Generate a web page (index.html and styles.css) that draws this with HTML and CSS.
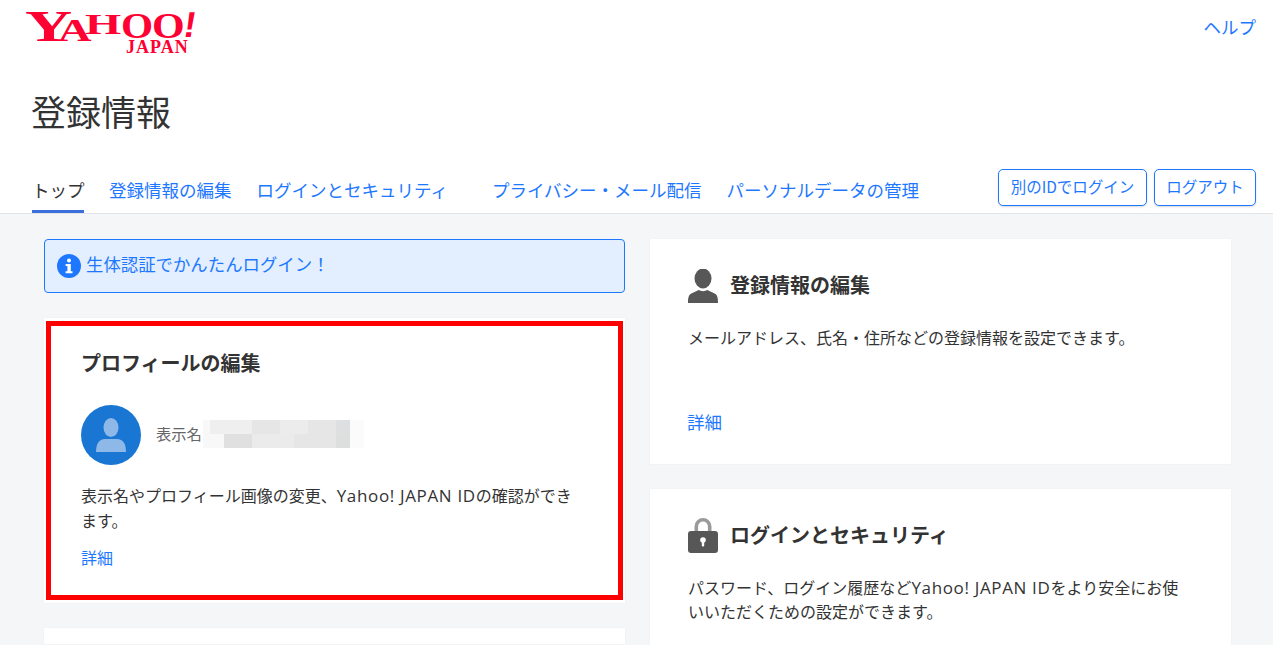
FILE: index.html
```html
<!DOCTYPE html>
<html lang="ja">
<head>
<meta charset="utf-8">
<title>登録情報</title>
<link rel="stylesheet" href="styles.css">
</head>
<body>
<header class="header">
  <div class="topbar">
    <div class="logo" aria-label="Yahoo! JAPAN">
      <div class="logo-main"><span class="l-y">Y</span><span class="l-a">A</span><span class="l-h">H</span><span class="l-o">O</span><span class="l-o l-o2">O</span><span class="l-x">!</span></div>
      <div class="logo-sub">JAPAN</div>
    </div>
    <a class="help">ヘルプ</a>
  </div>
  <h1 class="page-title">登録情報</h1>
  <div class="navrow">
    <nav class="tabs">
      <a class="tab active">トップ</a>
      <a class="tab">登録情報の編集</a>
      <a class="tab tab-wide">ログインとセキュリティ</a>
      <a class="tab">プライバシー・メール配信</a>
      <a class="tab">パーソナルデータの管理</a>
    </nav>
    <div class="actions">
      <a class="btn btn-id">別のIDでログイン</a>
      <a class="btn btn-out">ログアウト</a>
    </div>
  </div>
</header>
<main class="main">
  <div class="col">
    <div class="notice">
      <svg class="notice-icon" viewBox="0 0 24 24"><circle cx="12" cy="12" r="12" fill="#1e78ff"/><circle cx="12" cy="6.600" r="2" fill="#fff"/><path d="M8.600 10h5.200v7.200h1.700v2H8.600v-2h1.800v-5.200H8.600z" fill="#fff"/></svg>
      <span class="notice-text">生体認証でかんたんログイン&#xFF01;</span>
    </div>
    <section class="card profile">
      <h2 class="card-title">プロフィールの編集</h2>
      <div class="who">
        <svg class="avatar" viewBox="0 0 60 60"><circle cx="30" cy="30" r="30" fill="#1976d2"/><ellipse cx="30" cy="22.500" rx="7.500" ry="9.500" fill="#8db8e8"/><path d="M15 47c0-8 3-13 9-13h12c6 0 9 5 9 13z" fill="#8db8e8"/></svg>
        <span class="who-label">表示名</span>
        <div class="masked"></div>
      </div>
      <p class="desc">表示名やプロフィール画像の変更、<span class="lat">Yahoo! JAPAN ID</span>の確認ができ<br>ます。</p>
      <a class="more more-small">詳細</a>
      <div class="highlight"></div>
    </section>
    <section class="card stub"></section>
  </div>
  <div class="col">
    <section class="card feature feature-edit">
      <div class="feature-head">
        <svg class="feature-icon" viewBox="0 0 30 34"><ellipse cx="15" cy="9.500" rx="8.500" ry="10" fill="#575757"/><path d="M0 34c0-3 0-7 2.500-9 2-1.500 6-2.500 8-4 2.500 1.500 6.500 1.500 9 0 2 1.500 6 2.500 8 4 2.500 2 2.500 6 2.500 9z" fill="#575757"/></svg>
        <h2 class="card-title">登録情報の編集</h2>
      </div>
      <p class="desc">メールアドレス、氏名・住所などの登録情報を設定できます。</p>
      <a class="more more-edit">詳細</a>
    </section>
    <section class="card feature feature-login">
      <div class="feature-head">
        <svg class="feature-icon lock" viewBox="0 0 30 36"><path d="M6.500 16V9.500a8.500 8.500 0 0 1 17 0V16h-3.600V9.500a4.900 4.900 0 0 0-9.800 0V16z" fill="#9a9a9a"/><rect y="14" width="30" height="22" rx="3" fill="#575757"/><circle cx="15" cy="23" r="2.800" fill="#fff"/><rect x="13.800" y="23" width="2.400" height="6.500" rx="1" fill="#fff"/></svg>
        <h2 class="card-title">ログインとセキュリティ</h2>
      </div>
      <p class="desc">パスワード、ログイン履歴など<span class="lat">Yahoo! JAPAN ID</span>をより安全にお使<br>いいただくための設定ができます。</p>
    </section>
  </div>
</main>
</body>
</html>
```
FILE: styles.css
```css
* { box-sizing: border-box; }
html, body { margin: 0; height: 645px; overflow: hidden; }
body {
  background: #f5f6f8;
  color: #333;
  font-family: "Noto Sans CJK JP", "Noto Sans", sans-serif;
  font-size: 16px;
}
a { color: #1e78ff; text-decoration: none; }
h1, h2, p { margin: 0; }

.header {
  height: 214px;
  background: #fff;
  border-bottom: 1px solid #e3e4e8;
  padding: 0 17px 0 32px;
  display: flex;
  flex-direction: column;
}
.topbar { display: flex; justify-content: space-between; height: 85px; }
.logo { margin: 12px 0 0 -7px; width: 171px; height: 44px; color: #ff0033; font-family: "Liberation Serif", serif; font-weight: 700; }
.logo-main { display: flex; align-items: flex-start; height: 26px; line-height: 1; }
.logo-main span { display: block; flex: none; transform-origin: left top; }
.l-y { font-size: 45px; width: 33px; margin-top: -8px; transform: scaleX(1.45); }
.l-a { font-size: 32px; width: 27px; margin-top: 2px; transform: scaleX(1.45); }
.l-h { font-size: 30px; width: 36px; margin-top: -3px; transform: scaleX(1.55); }
.l-o { font-size: 35px; width: 31px; margin-top: -3px; transform: scaleX(1.18); }
.l-o2 { width: 33px; transform: scaleX(1.2); }
.logo-main .l-x { font-family: "Liberation Sans", sans-serif; font-size: 36px; width: 10px; margin-top: -5px; transform: skewX(-9deg) translateX(2px); }
.logo-sub { font-size: 18px; line-height: 18px; margin-left: 101px; letter-spacing: 1px; }
.help { font-size: 17.500px; line-height: 24px; margin-top: 15px; }
.page-title { font-size: 35px; font-weight: 400; line-height: 52px; margin-left: -1px; }
.navrow { display: flex; justify-content: space-between; align-items: flex-start; margin-top: 32px; }
.tabs { display: flex; gap: 25px; }
.tab { font-size: 17.500px; line-height: 26px; height: 44px; padding-top: 8px; white-space: nowrap; }
.tab.active { color: #333; border-bottom: 3px solid #3b6fdc; width: 52px; }
.tab-wide { margin-right: 19px; }
.actions { display: flex; gap: 7px; }
.btn {
  display: flex; align-items: center; justify-content: center;
  height: 37px;
  background: #fff;
  border: 1px solid #1e78ff;
  border-radius: 5px;
  box-shadow: 0 1px 2px rgba(0,0,0,.15);
  font-size: 15.500px;
  padding-bottom: 4px;
  white-space: nowrap;
}
.btn-id { width: 149px; }
.btn-out { width: 102px; }

.main { display: grid; grid-template-columns: 581px 581px; gap: 25px; padding: 25px 0 0 44px; }
.col { display: flex; flex-direction: column; }
.notice {
  height: 54px;
  background: #e3effe;
  border: 1px solid #1e78ff;
  border-radius: 4px;
  color: #1e78ff;
  font-size: 17.400px;
  display: flex; align-items: center; gap: 5px;
  padding-left: 12px;
  white-space: nowrap;
}
.notice-text { margin-bottom: 6px; }
.notice-icon { width: 24px; height: 24px; flex: none; }
.card { background: #fff; box-shadow: 0 0 2px rgba(0,0,0,.04); }
.card-title { font-size: 20px; font-weight: 700; line-height: 28px; white-space: nowrap; }
.desc { font-size: 16px; line-height: 25px; }
.lat { font-family: "Open Sans", sans-serif; font-size: 17px; line-height: 1; letter-spacing: .65px; }
.more { display: block; }
.profile { position: relative; height: 285px; margin-top: 25px; padding: 31px 37px 0; }
.highlight { position: absolute; left: 2px; top: 3px; width: 577px; height: 279px; border: 5px solid #ff0000; pointer-events: none; }
.who { display: flex; align-items: center; margin-top: 28px; }
.avatar { width: 60px; height: 60px; flex: none; }
.who-label { font-size: 15.300px; color: #666; margin: 0 0 4px 15px; line-height: 20px; }
.masked {
  width: 161px; height: 33px; margin: -8px 0 0 1px;
  background:
    linear-gradient(90deg, #f8f8f8 0 7px, #efefef 7px 49px, #e6e6e6 49px 77px, #ececec 77px 105px, #e6e6e6 105px 133px, #dddfe1 133px 147px, #fbfbfb 147px) 0 5px / 100% 14px no-repeat,
    linear-gradient(90deg, #f8f8f8 0 21px, #e0e0e0 21px 49px, #ebebeb 49px 91px, #e6e6e6 91px 133px, #dddfdf 133px 147px, #fbfbfb 147px) 0 19px / 100% 14px no-repeat;
}
.profile .desc { margin-top: 18px; }
.more-small { font-size: 16px; line-height: 24px; margin-top: 12px; }
.stub { margin-top: 25px; height: 16px; }

.feature { padding: 30px 38px 0; }
.feature-edit { height: 225px; margin-bottom: 25px; }
.feature-login { height: 156px; }
.feature-head { display: flex; align-items: center; gap: 12px; }
.feature-head .card-title { margin-top: -2px; }
.feature-icon { width: 30px; height: 34px; flex: none; }
.feature-icon.lock { height: 36px; margin-top: -2px; }
.feature-login .desc { margin-top: 22px; line-height: 24px; }
.feature-edit .desc { margin-top: 22px; }
.more-edit { font-size: 17.500px; line-height: 24px; margin: 60px 0 0 -1px; }
```
